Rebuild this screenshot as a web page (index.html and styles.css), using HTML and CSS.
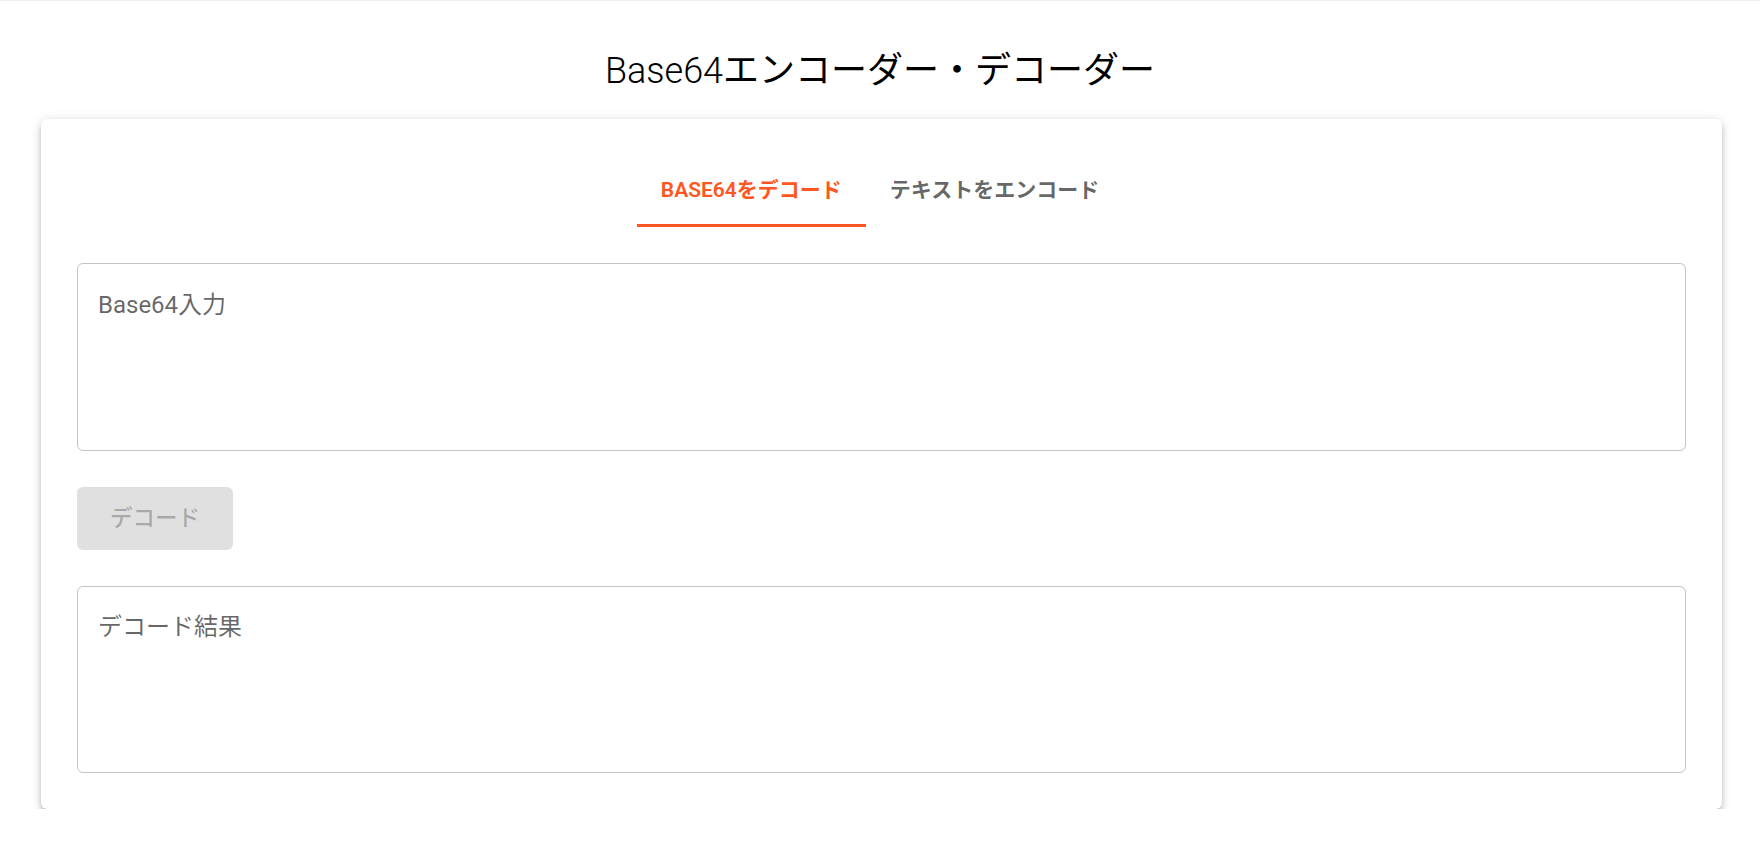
FILE: index.html
```html
<!DOCTYPE html>
<html lang="ja">
<head>
<meta charset="utf-8">
<title>Base64エンコーダー・デコーダー</title>
<link rel="stylesheet" href="styles.css">
</head>
<body>
<div class="topline"></div>
<main class="page">
  <h1 class="title"><span class="title-latin">Base64</span>エンコーダー・デコーダー</h1>
  <section class="card">
    <nav class="tabs">
      <button class="tab tab-active">Base64をデコード</button>
      <button class="tab">テキストをエンコード</button>
    </nav>
    <div class="field">
      <textarea class="field-input" rows="4" placeholder="Base64入力"></textarea>
    </div>
    <div class="actions">
      <button class="btn" disabled>デコード</button>
    </div>
    <div class="field">
      <textarea class="field-input" rows="4" placeholder="デコード結果" readonly></textarea>
    </div>
  </section>
</main>
</body>
</html>
```
FILE: styles.css
```css
html, body {
  margin: 0;
  padding: 0;
  background: #ffffff;
}

body {
  font-family: Roboto, "Noto Sans CJK JP", sans-serif;
  color: rgba(0, 0, 0, 0.87);
}

.topline {
  height: 1px;
  background: #f0f0f0;
}

.page {
  display: flex;
  flex-direction: column;
  padding: 0 38px 0 41px;
}

.title {
  margin: 46px 0 24px -3px;
  font-size: 36px;
  line-height: 48px;
  font-weight: 400;
  text-align: center;
  color: #000000;
}

.title-latin {
  font-weight: 300;
}

.card {
  display: flex;
  flex-direction: column;
  gap: 36px;
  padding: 36px;
  background: #ffffff;
  border-radius: 6px;
  box-shadow: 0 4.5px 4.5px -3px rgba(0, 0, 0, 0.25),
              0 4.5px 6px 0 rgba(0, 0, 0, 0.16),
              0 1.5px 12px 0 rgba(0, 0, 0, 0.12);
}

.tabs {
  display: flex;
  justify-content: center;
  margin-left: -3px;
}

.tab {
  min-height: 72px;
  padding: 18px 24px;
  border: none;
  border-bottom: 3px solid transparent;
  background: transparent;
  font-family: inherit;
  font-size: 21px;
  font-weight: 600;
  line-height: 26px;
  text-transform: uppercase;
  color: rgba(0, 0, 0, 0.6);
  cursor: pointer;
}

.tab-active {
  color: #ff5722;
  border-bottom-color: #ff5722;
}

.field {
  display: flex;
  border: 1px solid rgba(0, 0, 0, 0.23);
  border-radius: 6px;
  padding: 23.75px 20px;
}

.field-input {
  flex: 1;
  height: 138px;
  margin: 0;
  padding: 0;
  border: none;
  outline: none;
  resize: none;
  font-family: inherit;
  font-size: 24px;
  font-weight: 400;
  line-height: 34.5px;
  color: rgba(0, 0, 0, 0.87);
  background: transparent;
}

.field-input::placeholder {
  color: rgba(0, 0, 0, 0.6);
  opacity: 1;
}

.actions {
  display: flex;
}

.btn {
  height: 63px;
  padding: 0 33px;
  border: none;
  border-radius: 6px;
  background: rgba(0, 0, 0, 0.12);
  color: rgba(0, 0, 0, 0.26);
  font-family: inherit;
  font-size: 22.5px;
  font-weight: 500;
  line-height: 1;
}
```
